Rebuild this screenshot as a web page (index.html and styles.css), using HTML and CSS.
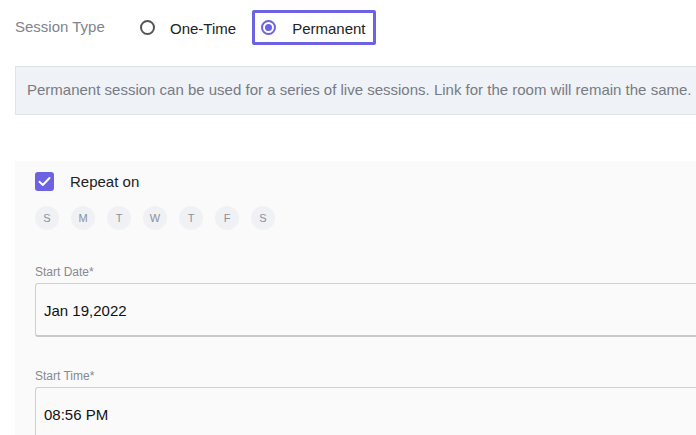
FILE: index.html
```html
<!DOCTYPE html>
<html>
<head>
<meta charset="utf-8">
<link rel="stylesheet" href="styles.css">
</head>
<body>
<div class="page">
  <div class="session-row">
    <span class="session-label">Session Type</span>
    <label class="option">
      <span class="radio"></span>
      <span class="option-text">One-Time</span>
    </label>
    <label class="option option-selected">
      <span class="radio radio-on"></span>
      <span class="option-text">Permanent</span>
    </label>
  </div>
  <div class="info">Permanent session can be used for a series of live sessions. Link for the room will remain the same.</div>
  <div class="repeat">
    <div class="repeat-row">
      <span class="checkbox">
        <svg width="13" height="11" viewBox="0 0 13 11"><path d="M1.5 5.8 L4.8 9 L11.5 2" fill="none" stroke="#fff" stroke-width="2" stroke-linecap="round" stroke-linejoin="round"/></svg>
      </span>
      <span class="repeat-text">Repeat on</span>
    </div>
    <div class="days">
      <span class="day">S</span>
      <span class="day">M</span>
      <span class="day">T</span>
      <span class="day">W</span>
      <span class="day">T</span>
      <span class="day">F</span>
      <span class="day">S</span>
    </div>
    <div class="field">
      <div class="field-label">Start Date*</div>
      <div class="input">Jan 19,2022</div>
    </div>
    <div class="field">
      <div class="field-label">Start Time*</div>
      <div class="input">08:56 PM</div>
    </div>
  </div>
</div>
</body>
</html>
```

FILE: styles.css
```css
html, body {
  margin: 0;
  padding: 0;
  background: #fff;
  overflow: hidden;
  font-family: "Liberation Sans", Arial, sans-serif;
}
.page {
  width: 740px;
  padding-left: 15px;
}
.session-row {
  display: flex;
  align-items: center;
  height: 35px;
  margin-top: 10px;
}
.session-label {
  font-size: 15px;
  color: #80848c;
  width: 125px;
  margin-top: -3px;
}
.option {
  display: flex;
  align-items: center;
  font-size: 15px;
  color: #222;
}
.option-text {
  padding-top: 2px;
}
.radio {
  box-sizing: border-box;
  width: 15px;
  height: 15px;
  border: 2px solid #555;
  border-radius: 50%;
  margin-right: 15px;
  display: inline-block;
}
.radio-on {
  border-color: #6c62e2;
  position: relative;
}
.radio-on::after {
  content: "";
  position: absolute;
  left: 2px;
  top: 2px;
  width: 7px;
  height: 7px;
  border-radius: 50%;
  background: #6c62e2;
}
.option-selected {
  box-sizing: border-box;
  margin-left: 16px;
  height: 35px;
  width: 124px;
  border: 3px solid #6c62e2;
  border-radius: 2px;
  padding-left: 6px;
}
.option-selected .radio {
  margin-right: 16px;
}
.info {
  box-sizing: border-box;
  margin-top: 21px;
  height: 49px;
  background: #eff2f7;
  border: 1px solid #dfe3ea;
  padding-left: 11px;
  padding-bottom: 2px;
  display: flex;
  align-items: center;
  font-size: 15px;
  color: #777b83;
}
.repeat {
  margin-top: 46px;
  background: #fafafa;
  padding: 11px 0 40px 20px;
}
.repeat-row {
  display: flex;
  align-items: center;
}
.checkbox {
  width: 19px;
  height: 19px;
  border-radius: 3px;
  background: #6c62e2;
  display: flex;
  align-items: center;
  justify-content: center;
  margin-right: 16px;
}
.repeat-text {
  font-size: 15px;
  color: #222;
}
.days {
  display: flex;
  gap: 12px;
  margin-top: 15px;
}
.day {
  width: 24px;
  height: 24px;
  border-radius: 50%;
  background: #f0f1f4;
  color: #8b9099;
  font-size: 11px;
  display: flex;
  align-items: center;
  justify-content: center;
}
.field {
  margin-top: 35px;
}
.field + .field {
  margin-top: 32px;
}
.field-label {
  font-size: 12px;
  color: #858a94;
  line-height: 14px;
  margin-bottom: 4px;
}
.input {
  box-sizing: border-box;
  height: 54px;
  border: 1px solid #cfcfcf;
  border-bottom: 2px solid #c8c8c8;
  border-radius: 3px 0 0 3px;
  background: #fafafa;
  display: flex;
  align-items: center;
  padding-left: 8px;
  padding-top: 1px;
  font-size: 15px;
  color: #111;
}
```
